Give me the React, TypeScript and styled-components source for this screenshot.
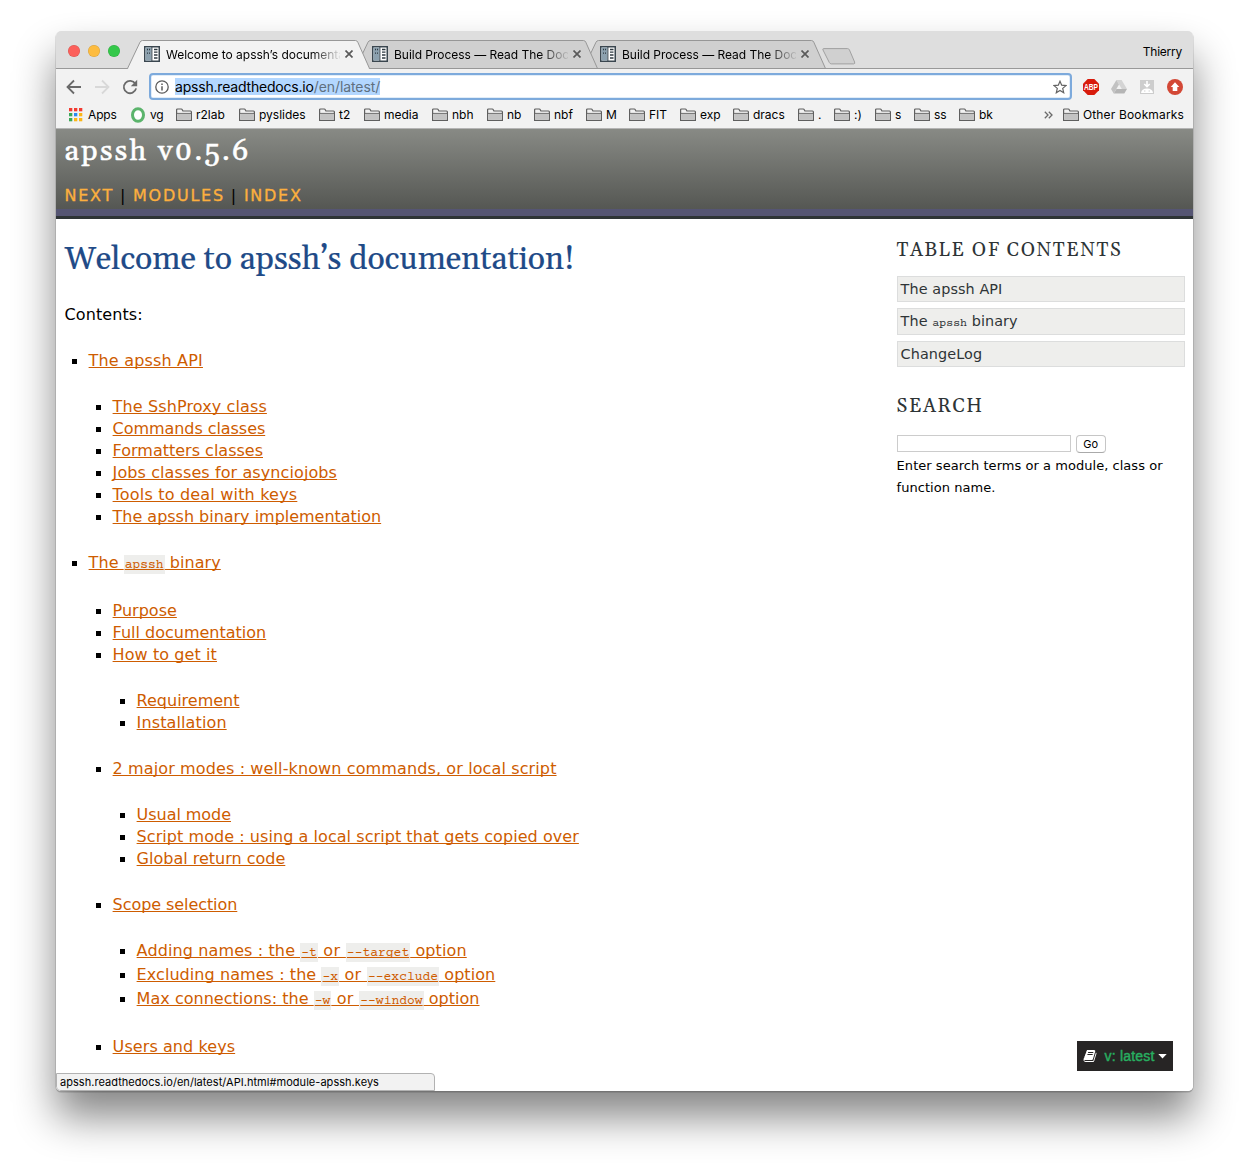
import React from 'react';
import styled, { createGlobalStyle } from 'styled-components';

const ui = '"Inter", "Liberation Sans", sans-serif';
const sans = '"DejaVu Sans", Verdana, sans-serif';
const serif = 'Gelasio, Georgia, "Noto Serif", "Liberation Serif", serif';
const mono = '"Courier Prime", "Nimbus Mono PS", "FreeMono", "Liberation Mono", monospace';

const Global = createGlobalStyle`
  * { box-sizing: border-box; }
  body { margin: 0; background: #fff; overflow: hidden; }
`;

const Desktop = styled.div`
  height: 1171px;
  padding: 31px 56px 0;
  overflow: hidden;
`;

const Window = styled.div`
  position: relative;
  display: flex;
  flex-direction: column;
  height: 1060px;
  border-radius: 5px;
  overflow: hidden;
  background: #fff;
`;

const Shadow = styled.div`
  border-radius: 5px;
  box-shadow: 0 1px 0 0.5px rgba(0, 0, 0, 0.2), 0 26px 42px rgba(0, 0, 0, 0.48);
`;

/* ---------- tab strip ---------- */

const TabStrip = styled.div`
  display: flex;
  align-items: flex-end;
  height: 38px;
  flex: none;
  padding-left: 12px;
  background: linear-gradient(#dedede, #dedede 37px, #999 37px);
  font: 12px/16px ${ui};
`;

const Lights = styled.div`
  display: flex;
  gap: 8px;
  width: 59px;
  height: 24px;
`;

const Light = styled.span<{ $fill: string }>`
  width: 12px;
  height: 12px;
  border-radius: 50%;
  background: ${p => p.$fill};
  box-shadow: inset 0 0 0 0.5px rgba(0, 0, 0, 0.15);
`;

const TabBox = styled.div<{ $order: number }>`
  position: relative;
  z-index: ${p => p.$order};
  display: flex;
  align-items: center;
  width: 243px;
  height: 29px;
  padding: 0 17px 1px;
  & + & { margin-left: -15px; }
`;

const TabShape = styled.svg`
  position: absolute;
  inset: 0;
  z-index: -1;
`;

const TabTitle = styled.span`
  width: 174px;
  margin: 2px 5px 0 6px;
  overflow: hidden;
  white-space: nowrap;
  letter-spacing: -0.03px;
  color: #000;
  mask-image: linear-gradient(90deg, #000 145px, transparent 176px);
`;

const NewTab = styled.svg`
  margin: 0 0 4px -4px;
`;

const User = styled.span`
  margin-left: auto;
  padding: 0 11px 9px 0;
  letter-spacing: -0.25px;
`;

function Favicon() {
  return (
    <svg width="16" height="16" viewBox="0 0 16 16">
      <rect x="0.75" y="0.75" width="14.5" height="14.5" fill="#fff" stroke="#3a464f" strokeWidth="1.5" />
      <rect x="1.5" y="1.5" width="6" height="13" fill="#8ca1af" />
      <path d="M7.9 1v14" stroke="#3a464f" strokeWidth="1" />
      <path d="M3 3.500h1M5 3.500h1M3 7.200h1M5 7.200h1M10 3.500h3.500M10 6.200h3.500M10 9h3.500M10 12h3.500" stroke="#2f3a42" strokeWidth="1.3" />
    </svg>
  );
}

function Tab({ title, active, order }: { title: string; active?: boolean; order: number }) {
  return (
    <TabBox $order={order}>
      <TabShape width="243" height="29" viewBox="0 0 243 29">
        <path
          d="M0.5 28.5L13 2.2Q13.900 0.500 15.500 0.500H228.500Q230 0.500 230.800 2.200L242.500 28.500"
          fill={active ? '#f2f2f2' : '#d0d0d0'}
          stroke="#979797"
        />
        {active ? <path d="M1.2 28.5H241.800" stroke="#f2f2f2" /> : <path d="M0 28.5H243" stroke="#979797" />}
      </TabShape>
      <Favicon />
      <TabTitle>{title}</TabTitle>
      <svg width="8" height="8" viewBox="0 0 8 8">
        <path d="M0.5 0.5l7 7M7.500 0.500l-7 7" stroke="#5a5a5a" strokeWidth="1.700" />
      </svg>
    </TabBox>
  );
}

/* ---------- address bar ---------- */

const Toolbar = styled.div`
  display: flex;
  align-items: center;
  flex: none;
  height: 32px;
  padding: 4px 10px 0 10px;
  background: #f2f2f2;
`;

const NavIcons = styled.div`
  display: flex;
  gap: 12px;
  width: 83px;
`;

const Omnibox = styled.div`
  display: flex;
  align-items: center;
  width: 923px;
  height: 27px;
  margin-bottom: 1px;
  padding: 0 3px 0 4px;
  border: 2px solid #7daadc;
  border-radius: 4px;
  box-shadow: inset 0 0 0 0.5px #c4dbf2;
  background: #fff;
`;

const Url = styled.span`
  margin-left: 6px;
  background: #b3d7ff;
  font: 14px/17px ${ui};
  letter-spacing: -0.2px;
  color: #000;
`;

const UrlPath = styled.span`
  color: #5f7080;
  letter-spacing: -0.08px;
`;

const StarSlot = styled.span`
  display: flex;
  margin-left: auto;
`;

const Extensions = styled.div`
  display: flex;
  gap: 12px;
  margin-left: 11px;
`;

/* ---------- bookmarks ---------- */

const Bookmarks = styled.div`
  display: flex;
  align-items: center;
  flex: none;
  height: 28px;
  padding: 0 9px 0 13px;
  background: linear-gradient(#f2f2f2, #f2f2f2 27px, #b4b4b4 27px);
  font: 12px/16px ${ui};
  color: #000;
`;

const Bookmark = styled.span<{ $width?: number }>`
  display: flex;
  align-items: center;
  flex: none;
  gap: 4px;
  width: ${p => (p.$width ? `${p.$width}px` : 'auto')};
  white-space: nowrap;
`;

const Launcher = styled(Bookmark)`
  gap: 5px;
  letter-spacing: -0.15px;
`;

const OtherBookmarks = styled(Bookmark)`
  letter-spacing: 0.15px;
`;

const Overflow = styled.span`
  display: flex;
  margin: 0 10px 0 auto;
`;

function Folder() {
  return (
    <svg width="16" height="14" viewBox="0 0 16 14">
      <path d="M0.6 12.400V1.900Q0.600 1 1.500 1H5.200Q6 1 6.400 1.900L6.900 3H14.500Q15.400 3 15.400 3.900V12.400Z" fill="#f2f2f2" stroke="#5f5f5f" strokeWidth="1.200" />
      <path d="M1.200 6H14.800V11.800H1.200Z" fill="#c3c3c3" />
      <path d="M1 5.400H15" stroke="#6c6c6c" />
    </svg>
  );
}

function AppsGrid() {
  const colors = ['#f23b31', '#f23b31', '#f23b31', '#3aa757', '#2a8af0', '#fbb617', '#3aa757', '#fbb617', '#fbb617'];
  return (
    <svg width="14" height="14" viewBox="0 0 14 14">
      {colors.map((c, i) => (
        <rect key={i} x={(i % 3) * 5} y={Math.floor(i / 3) * 5} width="3.300" height="3.300" fill={c} />
      ))}
    </svg>
  );
}

const folders: [string, number][] = [
  ['r2lab', 63], ['pyslides', 80], ['t2', 45], ['media', 68], ['nbh', 55], ['nb', 47], ['nbf', 52], ['M', 43], ['FIT', 51],
  ['exp', 53], ['dracs', 65], ['.', 36], [':)', 41], ['s', 39], ['ss', 45], ['bk', 60],
];

/* ---------- page ---------- */

const Header = styled.header`
  flex: none;
  height: 90px;
  padding: 3px 9px 0 8.500px;
  border-bottom: 3px solid #2e3436;
  background: linear-gradient(#888a85, #555753) 0 0 / 100% 80px no-repeat #555573;
`;

const ProjectTitle = styled.div`
  height: 53px;
  font: 28.8px/40px ${serif};
  font-variant-numeric: oldstyle-nums;
  letter-spacing: 0.08em;
  color: #fff;
  -webkit-text-stroke: 0.5px #fff;
`;

const RelLinks = styled.nav`
  display: flex;
  gap: 6px;
  font: 16px/22px ${sans};
  letter-spacing: 0.108em;
  text-transform: uppercase;
  color: #000;
`;

const RelLink = styled.a`
  color: #fcaf3e;
  -webkit-text-stroke: 0.35px #fcaf3e;
`;

const Page = styled.div`
  display: flex;
  justify-content: space-between;
  flex: 1;
  padding: 0 8px 0 8.600px;
`;

const Main = styled.main`
  font: 16px/22px ${sans};
  color: #000;
`;

const Heading = styled.h1`
  margin: 21px 0 0;
  height: 64px;
  font: 32px/40px ${serif};
  color: #204a87;
  -webkit-text-stroke: 0.2px #204a87;
`;

const Intro = styled.p`
  margin: 0 0 24px;
  letter-spacing: 0.08px;
`;

const List = styled.ul`
  display: flex;
  flex-direction: column;
  margin: 0;
  padding: 0;
  list-style: none;
`;

const Item = styled.li`
  padding-left: 24px;
  & > ${List} { margin: 24px 0; }
  &:last-child > ${List} { margin-bottom: 0; }
`;

const Row = styled.div<{ $tall: boolean }>`
  display: flex;
  align-items: flex-start;
  height: ${p => (p.$tall ? 24 : 22)}px;
  margin-left: -16.600px;
  white-space: nowrap;
  &::before {
    content: '';
    flex: none;
    width: 5px;
    height: 5px;
    margin: 9px 11.600px 0 0;
    background: #000;
  }
`;

const Link = styled.a<{ $track: number }>`
  color: #ce5c00;
  letter-spacing: ${p => p.$track}px;
  text-decoration: underline 1px;
  text-underline-offset: 1px;
  text-decoration-skip-ink: none;
`;

const Code = styled.code`
  padding: 3px 1px 2px;
  background: #eeeeec;
  font: 13px/17px ${mono};
  letter-spacing: 0;
`;

const Or = styled.span`
  letter-spacing: 0.35px;
`;

type Node = { text: React.ReactNode; track?: number; tall?: boolean; kids?: Node[] };

const or = <Or>{' or '}</Or>;

const contents: Node[] = [
  {
    text: 'The apssh API', track: 0.18, kids: [
      { text: 'The SshProxy class', track: 0.12 },
      { text: 'Commands classes', track: -0.06 },
      { text: 'Formatters classes' },
      { text: 'Jobs classes for asynciojobs', track: 0.1 },
      { text: 'Tools to deal with keys', track: 0.19 },
      { text: 'The apssh binary implementation', track: -0.02 },
    ],
  },
  {
    text: <>The <Code>apssh</Code> binary</>, track: 0.06, tall: true, kids: [
      { text: 'Purpose' },
      { text: 'Full documentation' },
      { text: 'How to get it', track: 0.09, kids: [{ text: 'Requirement' }, { text: 'Installation', track: 0.12 }] },
      {
        text: '2 major modes : well-known commands, or local script', track: 0.12, kids: [
          { text: 'Usual mode', track: -0.05 },
          { text: 'Script mode : using a local script that gets copied over', track: 0.06 },
          { text: 'Global return code' },
        ],
      },
      {
        text: 'Scope selection', track: -0.07, kids: [
          { text: <>Adding names : the <Code>-t</Code>{or}<Code>--target</Code> option</>, track: 0.12, tall: true },
          { text: <>Excluding names : the <Code>-x</Code>{or}<Code>--exclude</Code> option</>, track: 0.07, tall: true },
          { text: <>Max connections: the <Code>-w</Code>{or}<Code>--window</Code> option</>, track: 0.03, tall: true },
        ],
      },
      { text: 'Users and keys', track: 0.08 },
    ],
  },
];

function Tree({ nodes }: { nodes: Node[] }) {
  return (
    <List>
      {nodes.map((n, i) => (
        <Item key={i}>
          <Row $tall={!!n.tall}>
            <Link $track={n.track ?? 0}>{n.text}</Link>
          </Row>
          {n.kids && <Tree nodes={n.kids} />}
        </Item>
      ))}
    </List>
  );
}

const Sidebar = styled.aside`
  display: flex;
  flex-direction: column;
  width: 288.400px;
  padding-top: 20px;
  font: 13px/22px ${sans};
  color: #000;
`;

const SideTitle = styled.h3`
  margin: 0;
  height: 37px;
  font: 19.200px/24px ${serif};
  letter-spacing: 0.08em;
  text-transform: uppercase;
  color: #2e3436;
`;

const Toc = styled.div`
  display: flex;
  flex-direction: column;
  gap: 6px;
  margin-bottom: 28px;
`;

const TocItem = styled.a<{ $tall?: boolean }>`
  height: ${p => (p.$tall ? 27 : 26)}px;
  padding-left: 3px;
  border: 1px solid #dcdddd;
  background: #eeeeec;
  font-size: 14.4px;
  line-height: 24px;
  letter-spacing: 0.08px;
  color: #2e3436;
`;

const TocCode = styled.code`
  font: 11.6px/16px ${mono};
  letter-spacing: 0;
`;

const SearchForm = styled.div`
  display: flex;
  align-items: center;
  gap: 5px;
  height: 19px;
  margin: 2px 0;
`;

const SearchInput = styled.input`
  width: 174px;
  height: 17px;
  margin: 0;
  padding: 0;
  border: 1px solid #ccc;
  border-radius: 0;
  background: #fff;
`;

const GoButton = styled.button`
  width: 30px;
  height: 18px;
  padding: 0;
  border: 1px solid #c6c6c6;
  border-bottom-color: #aaa;
  border-radius: 4px;
  background: #fff;
  font: 11px/16px ${ui};
  color: #000;
`;

const SearchHint = styled.p`
  margin: 0;
  letter-spacing: 0.04px;
`;

const StatusBubble = styled.div`
  position: absolute;
  left: 0;
  bottom: 0;
  width: 379px;
  height: 18px;
  padding-left: 3px;
  border: 1px solid #b2b2b2;
  border-radius: 0 4px 0 4px;
  background: #f2f2f2;
  font: 11px/17px ${ui};
  letter-spacing: 0.04px;
  color: #000;
`;

const VersionBadge = styled.div`
  position: absolute;
  right: 20px;
  bottom: 20px;
  display: flex;
  align-items: center;
  width: 96px;
  height: 30px;
  padding-left: 6px;
  background: #272525;
  font: 14px/20px "Liberation Sans", Arial, sans-serif;
  color: #27ae60;
  -webkit-text-stroke: 0.45px #27ae60;
`;

const VersionText = styled.span`
  margin: 0 3px 0 7.500px;
  letter-spacing: 0.2px;
  white-space: nowrap;
`;

export default function App() {
  return (
    <Desktop>
      <Global />
      <Shadow>
        <Window>
          <TabStrip>
            <Lights>
              <Light $fill="#fc605b" />
              <Light $fill="#fdbc40" />
              <Light $fill="#34c84a" />
            </Lights>
            <Tab title="Welcome to apssh’s documentation" active order={3} />
            <Tab title="Build Process — Read The Docs" order={2} />
            <Tab title="Build Process — Read The Docs" order={1} />
            <NewTab width="34" height="17" viewBox="0 0 34 17">
              <path d="M1.500 0.600H25.500Q26.800 0.600 27.400 1.800L32.600 14Q33.300 15.900 31.500 15.900H9.500Q8 15.900 7.300 14.500L1 2Q0.500 0.600 1.500 0.600Z" fill="#d0d0d0" stroke="#a0a0a0" />
            </NewTab>
            <User>Thierry</User>
          </TabStrip>

          <Toolbar>
            <NavIcons>
              <svg width="16" height="16" viewBox="0 0 16 16" fill="none" stroke="#6a6a6a" strokeWidth="1.800">
                <path d="M15 8H2M8 1.500L1.500 8L8 14.500" />
              </svg>
              <svg width="16" height="16" viewBox="0 0 16 16" fill="none" stroke="#d8d8d8" strokeWidth="1.800">
                <path d="M1 8H14M8 1.500L14.500 8L8 14.500" />
              </svg>
              <svg width="16" height="16" viewBox="0 0 16 16">
                <path d="M13.300 4.700A6.200 6.200 0 1 0 14.100 9.400" fill="none" stroke="#6a6a6a" strokeWidth="1.800" />
                <path d="M15.200 0.800V7.200H8.800Z" fill="#6a6a6a" />
              </svg>
            </NavIcons>
            <Omnibox>
              <svg width="14" height="14" viewBox="0 0 14 14">
                <circle cx="7" cy="7" r="6.200" fill="none" stroke="#5a5a5a" strokeWidth="1.300" />
                <path d="M7 6.200V10.400M7 3.500V5" stroke="#5a5a5a" strokeWidth="1.500" />
              </svg>
              <Url>apssh.readthedocs.io<UrlPath>/en/latest/</UrlPath></Url>
              <StarSlot>
                <svg width="14" height="14" viewBox="0 0 14 14">
                  <path d="M7 1.200L8.700 5.200L13 5.600L9.700 8.400L10.700 12.700L7 10.400L3.300 12.700L4.300 8.400L1 5.600L5.300 5.200Z" fill="none" stroke="#636363" strokeWidth="1.200" />
                </svg>
              </StarSlot>
            </Omnibox>
            <Extensions>
              <svg width="16" height="16" viewBox="0 0 16 16">
                <path d="M4.700 0H11.300L16 4.700V11.300L11.300 16H4.700L0 11.300V4.700Z" fill="#d81b0c" />
                <text x="8" y="11" textAnchor="middle" fontFamily="Liberation Sans" fontWeight="700" fontSize="8.500" textLength="14" lengthAdjust="spacingAndGlyphs" fill="#fff">ABP</text>
              </svg>
              <svg width="16" height="16" viewBox="0 0 16 16">
                <path d="M5.400 1H10.600L16 10H10.800Z" fill="#d4d4d4" />
                <path d="M5.400 1L0 10L2.700 14.500L8 5.500Z" fill="#c2c2c2" />
                <path d="M5.500 10H16L13.300 14.500H2.700Z" fill="#b5b5b5" />
              </svg>
              <svg width="16" height="16" viewBox="0 0 16 16">
                <rect x="1" y="1" width="14" height="14" fill="#cdcdcd" />
                <path d="M2 14Q2.500 9.500 8 9.500T14 14Z" fill="#fff" />
                <path d="M8 2V7M5.300 5L8 7.700L10.700 5" fill="none" stroke="#fff" strokeWidth="1.600" />
                <path d="M5.300 12H6.300M9.700 12H10.700" stroke="#bbb" />
              </svg>
              <svg width="16" height="16" viewBox="0 0 16 16">
                <circle cx="8" cy="8" r="8" fill="#d34836" />
                <path d="M8 3.200L12.300 8H10.300V12H5.700V8H3.700Z" fill="#fff" />
              </svg>
            </Extensions>
          </Toolbar>

          <Bookmarks>
            <Launcher $width={62}><AppsGrid />Apps</Launcher>
            <Launcher $width={45}>
              <svg width="14" height="16" viewBox="0 0 14 16">
                <ellipse cx="7" cy="8" rx="5.500" ry="6.200" fill="#fff" stroke="#5bb46c" strokeWidth="3" />
              </svg>
              vg
            </Launcher>
            {folders.map(([name, width]) => (
              <Bookmark key={name} $width={width}><Folder />{name}</Bookmark>
            ))}
            <Overflow>
              <svg width="9" height="8" viewBox="0 0 9 8">
                <path d="M0.800 0.800L4 4L0.800 7.200M4.800 0.800L8 4L4.800 7.200" fill="none" stroke="#6a6a6a" strokeWidth="1.300" />
              </svg>
            </Overflow>
            <OtherBookmarks><Folder />Other Bookmarks</OtherBookmarks>
          </Bookmarks>

          <Header>
            <ProjectTitle>apssh v0.5.6</ProjectTitle>
            <RelLinks>
              <RelLink>Next</RelLink>|<RelLink>Modules</RelLink>|<RelLink>Index</RelLink>
            </RelLinks>
          </Header>

          <Page>
            <Main>
              <Heading>Welcome to apssh’s documentation!</Heading>
              <Intro>Contents:</Intro>
              <Tree nodes={contents} />
            </Main>
            <Sidebar>
              <SideTitle>Table Of Contents</SideTitle>
              <Toc>
                <TocItem>The apssh API</TocItem>
                <TocItem $tall>The <TocCode>apssh</TocCode> binary</TocItem>
                <TocItem>ChangeLog</TocItem>
              </Toc>
              <SideTitle>Search</SideTitle>
              <SearchForm>
                <SearchInput />
                <GoButton>Go</GoButton>
              </SearchForm>
              <SearchHint>Enter search terms or a module, class or function name.</SearchHint>
            </Sidebar>
          </Page>

          <StatusBubble>apssh.readthedocs.io/en/latest/API.html#module-apssh.keys</StatusBubble>
          <VersionBadge>
            <svg width="14" height="14" viewBox="0 0 1664 1792">
              <path fill="#fff" d="M1639 478q40 57 18 129l-275 906q-19 64-76.500 107.500t-122.500 43.500h-923q-77 0-148.500-53.500t-99.500-131.500q-24-67-2-127 0-4 3-27t4-37q1-8-3-21.500t-3-19.500q2-11 8-21t16.500-23.500 16.500-23.500q23-38 45-91.500t30-91.500q3-10 .5-30t-.5-28q3-11 17-28t17-23q21-36 42-92t25-90q1-9-2.500-32t.5-28q4-13 22-30.500t22-22.500q19-26 42.500-84.500t27.500-96.500q1-8-3-25.500t-2-26.500q2-8 9-18t18-23 17-21q8-12 16.500-30.500t15-35 16-36 19.500-32 26.500-23.500 36-11.500 47.500 5.500l-1 3q38-9 51-9h761q74 0 114 56t18 130l-274 906q-36 119-71.500 153.500t-128.500 34.500h-869q-27 0-38 15-11 16-1 43 24 70 144 70h923q29 0 56-15.500t35-41.500l300-987q7-22 5-57 38 15 59 43zM575 480q-4 13 2 22.500t20 9.500h608q13 0 25.500-9.500t16.500-22.500l21-64q4-13-2-22.500t-20-9.500h-608q-13 0-25.500 9.500t-16.500 22.500zM492 736q-4 13 2 22.500t20 9.500h608q13 0 25.500-9.500t16.500-22.500l21-64q4-13-2-22.500t-20-9.500h-608q-13 0-25.500 9.500t-16.500 22.500z" />
            </svg>
            <VersionText>v: latest</VersionText>
            <svg width="9" height="5" viewBox="0 0 9 5"><path d="M0.300 0H8.700L4.500 4.600Z" fill="#fff" /></svg>
          </VersionBadge>
        </Window>
      </Shadow>
    </Desktop>
  );
}
